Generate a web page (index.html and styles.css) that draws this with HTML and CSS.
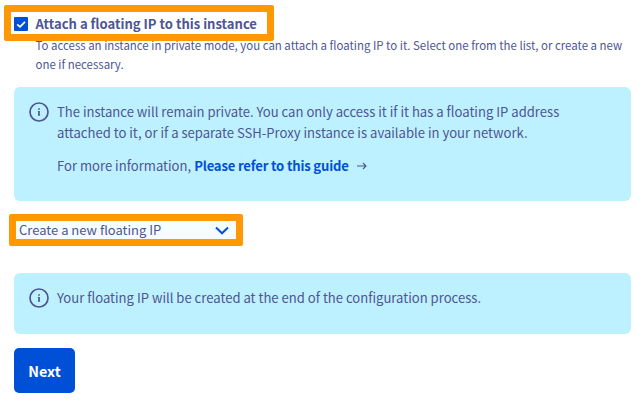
FILE: index.html
```html
<!DOCTYPE html>
<html lang="en">
<head>
<meta charset="utf-8">
<title>Floating IP</title>
<link rel="stylesheet" href="styles.css">
</head>
<body>
<main class="form">
  <section class="option">
    <label class="option-label">
      <span class="checkbox"><svg width="14" height="14" viewBox="0 0 14 14"><path d="M3.2 7.3 6 9.8 11 4.8"/></svg></span>
      <strong class="option-title">Attach a floating IP to this instance</strong>
    </label>
    <p class="option-help">To access an instance in private mode, you can attach a floating IP to it. Select one from the list, or create a new<br>one if necessary.</p>
    <div class="highlight"></div>
  </section>

  <section class="message message-large">
    <svg class="info" width="20" height="20" viewBox="0 0 20 20"><circle cx="10" cy="10" r="9"/><path d="M10 9v4.5M10 6.3v1.5"/><path class="serif" d="M8.9 9.4H10M8.9 13.1h2.3"/></svg>
    <div class="message-body">
      <p class="text">The instance will remain private. You can only access it if it has a floating IP address<br>attached to it, or if a separate SSH-Proxy instance is available in your network.</p>
      <p class="text more">For more information, <a class="link" href="#">Please refer to this guide</a><svg class="arrow" width="10" height="8" viewBox="0 0 10 8"><path d="M0 4h9M6 1l3 3-3 3"/></svg></p>
    </div>
  </section>

  <div class="select">
    <span class="select-value">Create a new floating IP</span>
    <svg class="chevron" width="14" height="9" viewBox="0 0 14 9"><path d="M1 1.5 7 7.3 13 1.5"/></svg>
  </div>

  <section class="message message-small">
    <svg class="info" width="20" height="20" viewBox="0 0 20 20"><circle cx="10" cy="10" r="9"/><path d="M10 9v4.5M10 6.3v1.5"/><path class="serif" d="M8.9 9.4H10M8.9 13.1h2.3"/></svg>
    <div class="message-body">
      <p class="text">Your floating IP will be created at the end of the configuration process.</p>
    </div>
  </section>

  <button class="next" type="button">Next</button>
</main>
</body>
</html>
```
FILE: styles.css
```css
* { box-sizing: border-box; }
body {
  margin: 0;
  background: #fff;
  color: #4d5592;
  font-family: "Noto Sans CJK SC", "Open Sans", sans-serif;
  font-size: 13.08px;
}
p { margin: 0; }
svg { display: block; fill: none; stroke: currentColor; flex: none; }
.form { padding: 14px 12px 0 14px; }

.option { position: relative; height: 73px; }
.option-label { display: flex; align-items: center; height: 20px; gap: 7.5px; }
.checkbox { width: 14px; height: 14px; border-radius: 1px; background: #0050d7; color: #fff; }
.checkbox svg { stroke-width: 1.7; }
.option-title { font-size: 13.05px; line-height: 20px; white-space: nowrap; }
.option-help { margin-left: 21.5px; font-size: 11.45px; line-height: 19px; padding-top: 2px; white-space: nowrap; }
.highlight {
  position: absolute;
  left: -10px;
  top: -9px;
  width: 270px;
  height: 36px;
  border: 7px solid #ff9803;
  border-radius: 2px;
}

.message { display: flex; gap: 8px; padding: 15px; border-radius: 6px; background: #bef1ff; }
.message-large { height: 114px; }
.message-small { height: 61px; margin-top: 27px; }
.message-body { margin-top: -1px; }
.info { stroke-width: 1.7; }
.info .serif { stroke-width: 0.8; }
.text { line-height: 21px; white-space: nowrap; }
.more { display: flex; align-items: center; gap: 3px; margin-top: 12px; }
.link { color: #0050d7; font-weight: 700; letter-spacing: -0.17px; text-decoration: none; }
.arrow { margin-left: 5px; stroke-width: 1.1; }

.select {
  display: flex;
  align-items: center;
  width: 234px;
  height: 32px;
  margin: 13px 0 0 -5px;
  padding: 0 7px 0 3px;
  border: 7px solid #ff9803;
  border-radius: 2px;
  background: #f5feff;
  justify-content: space-between;
}
.select-value { font-size: 13px; line-height: 18px; white-space: nowrap; }
.chevron { color: #0050d7; stroke-width: 2; }

.next {
  display: block;
  width: 61px;
  height: 45px;
  margin-top: 14px;
  padding: 0;
  border: 0;
  border-radius: 5px;
  background: #0050d7;
  color: #fff;
  font: 700 14.3px/46px "Noto Sans CJK SC", "Open Sans", sans-serif;
}
```
